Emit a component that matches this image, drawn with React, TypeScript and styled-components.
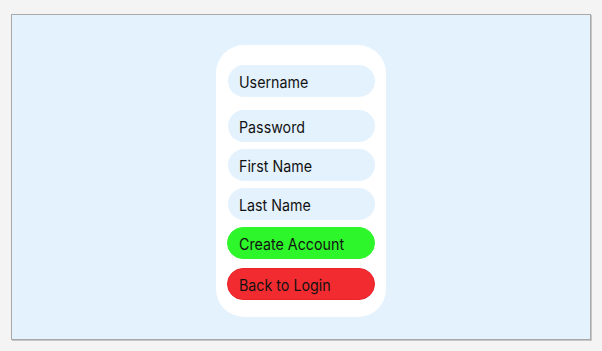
import React, { FC } from 'react';
import styled, { createGlobalStyle } from 'styled-components';

const GlobalStyle = createGlobalStyle`
  html, body {
    margin: 0;
    padding: 0;
    background: #f4f4f4;
    font-family: Inter, "Noto Sans", sans-serif;
  }
`;

const Page = styled.div`
  width: 602px;
  height: 351px;
  padding: 14px 0 0 11px;
  box-sizing: border-box;
`;

const Frame = styled.div`
  width: 580px;
  height: 326px;
  box-sizing: border-box;
  background: #e4f2fe;
  border: 1px solid #a9a9a9;
  box-shadow: 1px 1px 0 #c6c6c6;
  display: flex;
  justify-content: center;
  align-items: flex-start;
  padding-top: 30px;
`;

const Card = styled.div`
  width: 170px;
  box-sizing: border-box;
  background: #ffffff;
  border-radius: 28px;
  padding: 20px 11px 17px 12px;
  display: flex;
  flex-direction: column;
`;

// the mockup's lettering is a touch narrower than Inter, so squeeze it
const Label = styled.span`
  display: inline-block;
  padding-top: 3px;
  font-size: 15.5px;
  line-height: 1;
  color: #111111;
  transform: scaleX(0.92);
  transform-origin: left center;
  white-space: nowrap;
`;

const Field = styled.div<{ $gap: number }>`
  height: 32px;
  width: 147px;
  box-sizing: border-box;
  margin-bottom: ${({ $gap }) => $gap}px;
  border-radius: 16px;
  background: #e4f2fe;
  padding-left: 11px;
  display: flex;
  align-items: center;
`;

const Button = styled.button<{ $bg: string; $edge: string; $gap: number }>`
  height: 32px;
  width: 148px;
  margin: 0 0 ${({ $gap }) => $gap}px -1px;
  border: 1px solid ${({ $edge }) => $edge};
  border-radius: 16px;
  background: ${({ $bg }) => $bg};
  padding: 0 0 0 11px;
  display: flex;
  align-items: center;
  font-family: Inter, "Noto Sans", sans-serif;
`;

const App: FC = () => (
  <Page>
    <GlobalStyle />
    <Frame>
      <Card>
        <Field $gap={13}><Label>Username</Label></Field>
        <Field $gap={7}><Label>Password</Label></Field>
        <Field $gap={7}><Label>First Name</Label></Field>
        <Field $gap={7}><Label>Last Name</Label></Field>
        <Button $bg="#2df62a" $edge="#2df62a" $gap={9}><Label>Create Account</Label></Button>
        <Button $bg="#f22b30" $edge="#e8262c" $gap={0}><Label>Back to Login</Label></Button>
      </Card>
    </Frame>
  </Page>
);

export default App;
